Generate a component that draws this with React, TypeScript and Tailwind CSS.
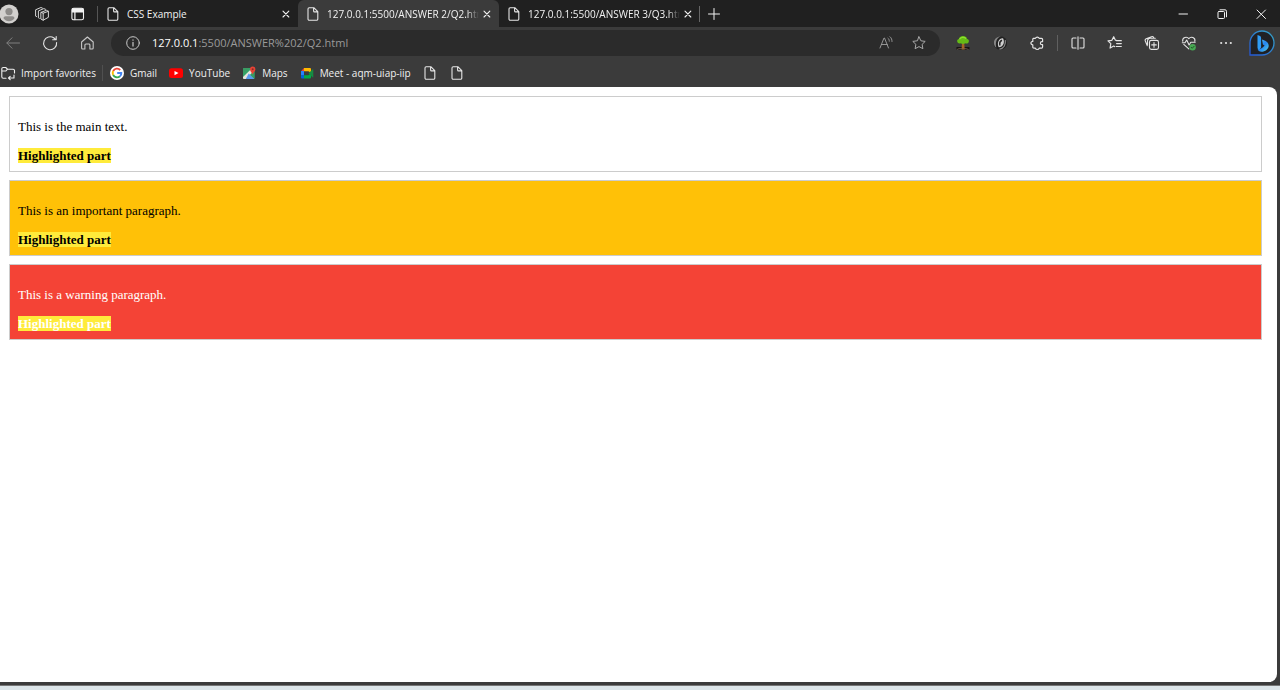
import React from "react";

type IconProps = { className?: string; children: React.ReactNode };

function Icon({ className = "size-4", children }: IconProps) {
  return (
    <svg
      viewBox="0 0 16 16"
      fill="none"
      stroke="currentColor"
      strokeLinecap="round"
      strokeLinejoin="round"
      aria-hidden="true"
      className={`shrink-0 ${className}`}
    >
      {children}
    </svg>
  );
}

const FileIcon = () => (
  <Icon className="size-4 text-[#e6e6e6]">
    <path d="M4.2 1.7h4.6l4 4v7.4a1.2 1.2 0 0 1-1.2 1.2H4.2A1.2 1.2 0 0 1 3 13.1V2.9a1.2 1.2 0 0 1 1.2-1.2ZM8.6 1.9v3a1 1 0 0 0 1 1h3" strokeWidth="1.1" />
  </Icon>
);

const CloseIcon = () => (
  <Icon className="size-4">
    <path d="m5 5.2 5.800 5.800M10.800 5.200 5 11" strokeWidth="1.1" />
  </Icon>
);

type TabProps = { title: string; active?: boolean; first?: boolean };

function Tab({ title, active, first }: TabProps) {
  return (
    <div
      role="tab"
      aria-selected={!!active}
      className={`flex h-full items-center pr-1 pl-[7px] ${first ? "w-[200px]" : "w-[201px]"} ${
        active ? "rounded-t-md bg-[#3b3b3b]" : "bg-[#202020]"
      }`}
    >
      <FileIcon />
      <span
        className={`ml-[6px] min-w-0 flex-1 overflow-hidden text-[10px] leading-4 whitespace-nowrap ${
          first ? "" : "mask-r-from-92% mask-r-to-100%"
        }`}
      >
        {title}
      </span>
      <button aria-label="Close tab" className="flex">
        <CloseIcon />
      </button>
    </div>
  );
}

function TabBar() {
  return (
    <header className="flex h-[27px] shrink-0 items-center bg-[#202020] text-[#f2f2f2]">
      <button aria-label="Profile" className="-ml-px">
        <svg viewBox="0 0 20 20" className="size-5" aria-hidden="true">
          <circle cx="10" cy="10" r="9.5" fill="#d2d0ce" />
          <circle cx="10" cy="7.6" r="3.6" fill="#8d8b89" />
          <path d="M4.5 14.2c0-1.3 1-2 2.2-2h6.6c1.2 0 2.2.7 2.2 2-1.3 2-3.3 3-5.5 3s-4.200-1-5.500-3Z" fill="#8d8b89" />
        </svg>
      </button>
      <button aria-label="Workspaces" className="ml-[15px] text-[#d6d6d6]">
        <Icon className="size-4">
          <path d="m7.200 6.300 5.200-2 2 1v6l-5.200 2.900-2-1Zm0 0 2 .9 5.200-1.900M9.200 7.200v7" />
          <path d="M5.300 12.300 4.400 11.800V4.900l5.400-2.300 1.700.7M2.600 10.600l-1-.5V3.800L6.900 1.500l1.500.6" />
        </Icon>
      </button>
      <button aria-label="Tab actions" className="ml-5">
        <Icon className="size-4">
          <rect x="1.900" y="2.200" width="11.600" height="11.600" rx="1.800" strokeWidth="1.100" />
          <path d="M2.500 2.900h10.400v3H2.500ZM4.900 6v7.600" strokeWidth="1.200" fill="currentColor" />
        </Icon>
      </button>
      <span className="ml-[11px] h-4 w-px bg-[#555]" />
      <div role="tablist" className="flex h-full">
        <Tab title="CSS Example" first />
        <Tab title="127.0.0.1:5500/ANSWER 2/Q2.html" active />
        <Tab title="127.0.0.1:5500/ANSWER 3/Q3.html" />
      </div>
      <span className="-ml-px h-4 w-px bg-[#666]" />
      <button aria-label="New tab" className="ml-[6px]">
        <Icon className="size-4">
          <path d="M8 2.500v11M2.500 8h11" />
        </Icon>
      </button>
      <div className="mr-[11px] ml-auto flex gap-[23px]">
        <button aria-label="Minimize">
          <Icon><path d="M4 8h8.500" /></Icon>
        </button>
        <button aria-label="Restore">
          <Icon>
            <rect x="4" y="5.500" width="6.500" height="7" rx="1" />
            <path d="M6 3.800h5a1.500 1.500 0 0 1 1.500 1.500v5.500" />
          </Icon>
        </button>
        <button aria-label="Close window">
          <Icon><path d="m4 4 8.500 8.500M12.500 4 4 12.500" /></Icon>
        </button>
      </div>
    </header>
  );
}

function AddressBar() {
  return (
    <form className="ml-4 flex h-[26px] min-w-0 flex-1 items-center rounded-full bg-[#2b2b2b] px-[13px]" onSubmit={(e) => e.preventDefault()}>
      <button type="button" aria-label="Site information" className="mr-[11px] ml-px text-[#c8c8c8]">
        <Icon>
          <circle cx="8" cy="8" r="6.300" />
          <path d="M8 7.300v3.800M8 4.900v.3" strokeWidth="1.200" />
        </Icon>
      </button>
      <label htmlFor="address" className="text-[11px] leading-4 text-white">127.0.0.1</label>
      <input
        id="address"
        defaultValue=":5500/ANSWER%202/Q2.html"
        className="min-w-0 flex-1 bg-transparent text-[11px] leading-4 text-[#9a9a9a] outline-none"
      />
      <button type="button" aria-label="Read aloud" className="text-[#a0a0a0]">
        <Icon>
          <path d="M2 13 6 3h.5l4 10M3.400 9.500h5.800M10 3.200c1 .8 1.300 1.800 1.300 3M12 1.800c1.500 1.200 2 2.800 2 4.700" strokeWidth=".9" />
        </Icon>
      </button>
      <button type="button" aria-label="Add to favorites" className="ml-[17px] text-[#a8a8a8]">
        <Icon>
          <path d="m8 1.800 1.900 4 4.300.6-3.100 3 .8 4.300L8 11.600l-3.900 2.100.8-4.300-3.100-3 4.300-.6Z" />
        </Icon>
      </button>
    </form>
  );
}

function Toolbar() {
  return (
    <nav aria-label="Browser toolbar" className="flex h-8 shrink-0 items-center px-[5px] text-[#e4e4e4]">
      <button aria-label="Back" className="text-[#808080]">
        <Icon><path d="M14.500 8H2M7 2.800 1.800 8 7 13.200" /></Icon>
      </button>
      <button aria-label="Refresh" className="ml-[21px]">
        <Icon>
          <path d="M14.600 7.500A6.500 6.500 0 1 1 12 3l1.700 1.700M14.200 1.500v3.300h-3.500" strokeWidth="1.100" />
        </Icon>
      </button>
      <button aria-label="Home" className="ml-[21px] text-[#c8c8c8]">
        <Icon>
          <path d="M2.600 7 8.400 2l5.800 5v6a1 1 0 0 1-1 1h-2.300V9.800a1 1 0 0 0-1-.8h-3a1 1 0 0 0-1 1v4H3.600a1 1 0 0 1-1-1Z" strokeWidth="1.100" />
        </Icon>
      </button>
      <AddressBar />
      <div className="ml-[15px] flex items-center gap-[21px]">
        <button aria-label="Tree extension">
          <svg viewBox="0 0 16 16" className="size-4" aria-hidden="true">
            <path d="M1.500 12h13v2.500h-13Z" fill="#171313" />
            <path d="M7 8h2.200l.5 6.500H6.600Z" fill="#a76524" />
            <path d="M2.200 6.500C1.800 4.800 3 4 4 3.900 4 2.200 6 .8 8 .9c2.200-.1 4 1.300 4 3 1.500.2 2.400 1.600 1.700 3-.5 1.500-2.300 1.900-3.300 1.300-1.400.9-3.400.9-4.700 0-1.500.7-3.200-.1-3.500-1.700Z" fill="#65bb16" />
            <path d="M4.500 4.300c1.200-2.400 4.500-2.500 6.500-.8" stroke="#8ee02e" strokeWidth="1.300" fill="none" />
            <path d="m2 14.500 2-1h7l2.500 1" stroke="#80604b" strokeWidth=".7" fill="none" />
          </svg>
        </button>
        <button aria-label="Swirl extension">
          <svg viewBox="0 0 16 16" className="size-4" aria-hidden="true">
            <circle cx="8.300" cy="8" r="6.800" fill="#222" />
            <path d="M9.500 1.600C5 2 3 7 4.300 12.800 1.200 10.400 1 5.500 4 3c1.600-1.400 3.600-1.900 5.500-1.400Z" fill="#858585" />
            <path d="M11 3.300c-4-.4-6.500 4.500-4.300 9C11 12.200 13.300 7.500 11 3.300Z" fill="#cfcfcf" />
            <path d="M10 5.200C8.200 6 7.400 8.400 8 10.500" stroke="#272727" strokeWidth="1.500" fill="none" />
            <path d="M7.500 14.200c4.200-.6 6.500-4.400 5.800-9" stroke="#8a8a8a" strokeWidth="1.200" fill="none" />
          </svg>
        </button>
        <button aria-label="Extensions">
          <Icon>
            <path d="M4.200 3.400h2.200a2 1.900 0 0 1 3.800 0h2.300a1.100 1.100 0 0 1 1.100 1.100v2.200h-.7a1.500 1.500 0 0 0 0 3h.7v2.400a1.100 1.100 0 0 1-1.100 1.100h-2.300a2 1.900 0 0 1-3.800 0H4.900a1.100 1.100 0 0 1-1.100-1.100V9.800a1.900 1.700 0 0 1 0-3.400V4.100a.8.8 0 0 1 .4-.7Z" strokeWidth="1.200" />
          </Icon>
        </button>
      </div>
      <span className="ml-3 h-4 w-px bg-[#606060]" />
      <div className="ml-3 flex items-center gap-[21px]">
        <button aria-label="Split screen">
          <Icon>
            <path d="M6 3H3a1 1 0 0 0-1 1v8a1 1 0 0 0 1 1h3M10 3h3a1 1 0 0 1 1 1v8a1 1 0 0 1-1 1h-3M8 1.800v12.400" strokeWidth="1.100" />
          </Icon>
        </button>
        <button aria-label="Favorites">
          <Icon>
            <path d="M9.300 5.300 8.400 5.200 6.700 1.700 4.900 5.300l-3.900.6 2.800 2.800-.7 4.400 3.600-2 .8.500M9.600 5.700h4.700M9.600 8.600h4.700M9.200 11.500h5.100" strokeWidth="1.200" />
          </Icon>
        </button>
        <button aria-label="Collections">
          <Icon>
            <rect x="5.500" y="5.400" width="9" height="9" rx="1.800" strokeWidth="1.100" />
            <path d="M10 7.600v4.600M7.700 9.900h4.600M3.300 10.800 1.300 6a1.700 1.700 0 0 1 .9-2.200l5.300-2.100a1.700 1.700 0 0 1 2.200.9l.1.300M3.500 9.400V5.900a2.700 2.700 0 0 1 2.700-2.700h5.100" strokeWidth="1.100" />
          </Icon>
        </button>
        <button aria-label="Browser essentials">
          <Icon>
            <path d="M1.700 6.200c-.5-4.200 4.300-5 6.100-2.600 2.300-2.600 6.700-1.100 6.100 2.600M2.800 9.300l5 4.500M1.300 7.700H4L5.700 5l2.400 5 1.700-2.800h4.400" strokeWidth="1.100" />
            <circle cx="11.600" cy="12.300" r="3.200" fill="#48a853" stroke="none" />
            <path d="m10.200 12.300 1 1 1.900-2" stroke="#205a2a" />
          </Icon>
        </button>
        <button aria-label="Settings and more">
          <svg viewBox="0 0 16 16" fill="currentColor" className="size-4" aria-hidden="true">
            <circle cx="3.200" cy="8" r="1.100" />
            <circle cx="8" cy="8" r="1.100" />
            <circle cx="12.800" cy="8" r="1.100" />
          </svg>
        </button>
      </div>
      <button aria-label="Bing chat" className="ml-[15px]">
        <svg viewBox="0 0 26 26" className="size-[26px]" aria-hidden="true">
          <defs>
            <linearGradient id="bubble" x1="0" y1="1" x2="1" y2="0">
              <stop stopColor="#2457d5" />
              <stop offset="1" stopColor="#36a6c7" />
            </linearGradient>
            <linearGradient id="bing" x1="0" y1="0" x2="1" y2="1">
              <stop stopColor="#52c9f5" />
              <stop offset=".5" stopColor="#2584ef" />
              <stop offset="1" stopColor="#56d4e5" />
            </linearGradient>
          </defs>
          <path d="M1 25V13A12 12 0 1 1 13 25Z" fill="#202124" stroke="url(#bubble)" strokeWidth="1.300" />
          <path d="M8.500 5c2 .4 3.600 1.200 3.600 3v9.500l-2 2.600c-1-.5-1.600-1.400-1.600-2.600Z" fill="#2f9cf4" />
          <path d="M13 9.500c3.600 1 6.700 3 6.700 6.200 0 3.300-3.600 6-7.300 6-2 0-3.300-1-3.700-2.700 2.200.9 5.300-1.200 6.900-3.400l-1.700-1Z" fill="url(#bing)" />
        </svg>
      </button>
    </nav>
  );
}

const GoogleLogo = () => (
  <svg viewBox="0 0 16 16" className="size-4" aria-hidden="true">
    <circle cx="8" cy="8" r="7" fill="#fff" />
    <g fill="none" strokeWidth="1.900">
      <path d="M11.200 5A4.300 4.300 0 0 0 4.200 6" stroke="#ea4335" />
      <path d="M4.200 6a4.300 4.300 0 0 0 0 4" stroke="#fbbc05" />
      <path d="M4.200 10a4.300 4.300 0 0 0 6.700 1.300" stroke="#34a853" />
      <path d="M10.900 11.300A4 4 0 0 0 12.300 8H8.200" stroke="#4285f4" />
    </g>
  </svg>
);

const YouTubeLogo = () => (
  <svg viewBox="0 0 16 16" className="size-4" aria-hidden="true">
    <rect x="1" y="3.200" width="14" height="9.800" rx="2.500" fill="#f00" />
    <path d="m6.500 5.900 4 2.200-4 2.200Z" fill="#fff" />
  </svg>
);

const MapsLogo = () => (
  <svg viewBox="0 0 16 16" className="size-4" aria-hidden="true">
    <rect x="2" y="3" width="11.500" height="11" rx="1" fill="#34a367" />
    <path d="M2 12 11 3.300l2.500 2L5 14H3a1 1 0 0 1-1-1Z" fill="#e7e5dc" />
    <path d="m7.700 8.500 5.800 5.500H4.800Z" fill="#5b9bed" />
    <path d="M13.500 7v6.500L9.500 9.500Z" fill="#3b9b63" />
    <path d="M2 4a1 1 0 0 1 1-1h5L2 9Z" fill="#3b9b63" />
    <path d="M11.500 9.500C11 7.500 9 6.500 9 4.200a2.700 2.700 0 0 1 5.400 0c0 2.300-2.300 3.300-2.900 5.300Z" fill="#e74335" />
    <circle cx="11.700" cy="4.200" r="1" fill="#8b2b26" />
  </svg>
);

const MeetLogo = () => (
  <svg viewBox="0 0 16 16" className="size-4" aria-hidden="true">
    <path d="M2 6.200 5 3v3.200Z" fill="#ea4335" />
    <path d="M2 6h3v4.500H2Z" fill="#2684fc" />
    <path d="M2 10.300h3v3.200H3a1 1 0 0 1-1-1Z" fill="#0066da" />
    <path d="M5 3h6a1 1 0 0 1 1 1v4L9.500 6.200H5Z" fill="#ffba00" />
    <path d="M5 10.300h4.500L12 8v4.500a1 1 0 0 1-1 1H5Z" fill="#00ac47" />
    <path d="m9.500 8.200 4-3.700c.4-.3.800-.1.800.4v7c0 .5-.4.700-.8.400Z" fill="#168b42" />
  </svg>
);

const bookmarks = [
  { label: "Gmail", logo: <GoogleLogo /> },
  { label: "YouTube", logo: <YouTubeLogo /> },
  { label: "Maps", logo: <MapsLogo /> },
  { label: "Meet - aqm-uiap-iip", logo: <MeetLogo /> },
];

function BookmarksBar() {
  return (
    <nav aria-label="Favorites bar" className="flex h-7 shrink-0 items-center text-[10px] leading-4 text-[#f0f0f0]">
      <button className="flex items-center gap-[5px]">
        <Icon>
          <path d="M6 13.200H3.200A1.400 1.400 0 0 1 1.800 11.800V3.900a1.400 1.400 0 0 1 1.400-1.400h2.500l1.800 1.700h5.600a1.400 1.400 0 0 1 1.400 1.400V8M1.900 6h4l1.600-1.800M14 10v3H8.500M10.200 11.300 8.500 13l1.700 1.700" strokeWidth="1.100" />
        </Icon>
        Import favorites
      </button>
      <span className="ml-[6px] h-4 w-px bg-[#505050]" />
      <div className="ml-[6px] flex items-center gap-[11px]">
        {bookmarks.map((b) => (
          <a key={b.label} href="#" className="flex items-center gap-[5px]">
            {b.logo}
            {b.label}
          </a>
        ))}
        <a href="#" aria-label="Saved page"><FileIcon /></a>
        <a href="#" aria-label="Saved page"><FileIcon /></a>
      </div>
    </nav>
  );
}

const notes = [
  { text: "This is the main text.", tone: "bg-white text-black" },
  { text: "This is an important paragraph.", tone: "bg-[#ffc107] text-black" },
  { text: "This is a warning paragraph.", tone: "bg-[#f44336] text-white" },
];

function PageContent() {
  return (
    <main className="mr-[3px] flex flex-1 flex-col gap-2 rounded-r-lg bg-white pt-[9px] pr-[15px] pl-[9px] font-['Liberation_Serif',serif] text-[13px] leading-[15px]">
      {notes.map((n) => (
        <section key={n.text} className={`border border-[#ccc] px-2 pt-[22px] pb-2 ${n.tone}`}>
          <p className="mb-[14px]">{n.text}</p>
          <strong className="block">
            <span className="bg-[#ffeb3b]">Highlighted part</span>
          </strong>
        </section>
      ))}
    </main>
  );
}

export default function App() {
  return (
    <div className="flex min-h-screen flex-col bg-[#3b3b3b] font-['Open_Sans',sans-serif]">
      <TabBar />
      <Toolbar />
      <BookmarksBar />
      <PageContent />
      <div className="mt-[3px] h-[5px] shrink-0 border-t border-[#777] bg-[#dce5e9]" />
    </div>
  );
}
